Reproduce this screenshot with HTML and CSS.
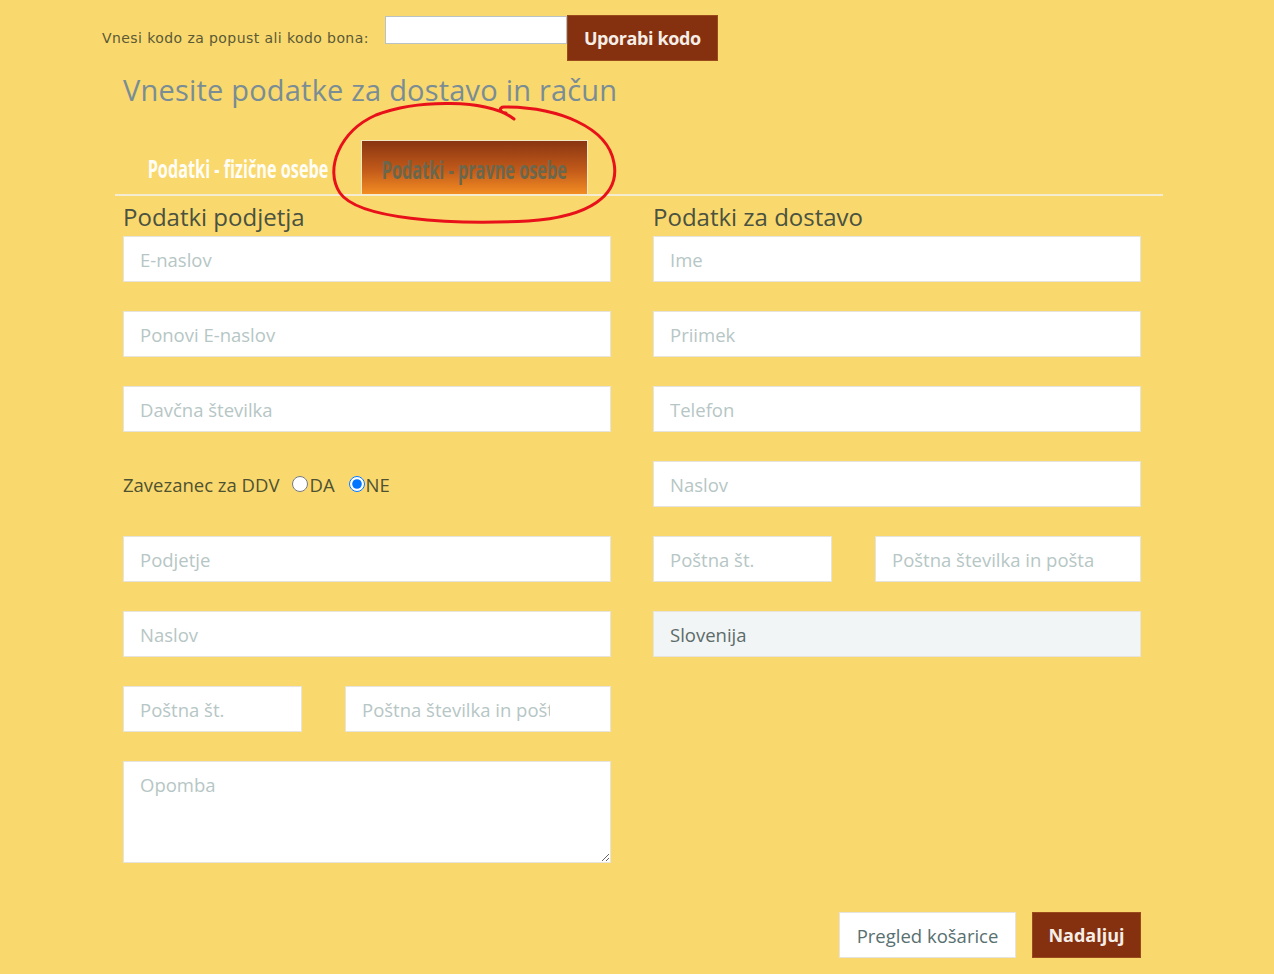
FILE: index.html
```html
<!DOCTYPE html>
<html lang="sl">
<head>
  <meta charset="UTF-8">
  <title>Podatki za dostavo</title>
  <link rel="stylesheet" href="styles.css">
</head>
<body>
  <div class="page">
    <div class="coupon">
      <label for="kupon">Vnesi kodo za popust ali kodo bona:</label>
      <input type="text" id="kupon" class="coupon-input">
      <button class="btn-brown btn-coupon">Uporabi kodo</button>
    </div>

    <h1 class="title">Vnesite podatke za dostavo in račun</h1>

    <div class="tabs">
      <div class="tab"><span>Podatki - fizične osebe</span></div>
      <div class="tab active"><span>Podatki - pravne osebe</span></div>
    </div>

    <div class="columns">
      <div class="col">
        <h2>Podatki podjetja</h2>
        <input class="field" type="text" placeholder="E-naslov">
        <input class="field" type="text" placeholder="Ponovi E-naslov">
        <input class="field" type="text" placeholder="Davčna številka">
        <div class="radio-row">
          <span>Zavezanec za DDV</span>
          <label class="opt"><input type="radio" name="ddv">DA</label>
          <label class="opt"><input type="radio" name="ddv" checked>NE</label>
        </div>
        <input class="field" type="text" placeholder="Podjetje">
        <input class="field" type="text" placeholder="Naslov">
        <div class="post-row">
          <input class="field post-num" type="text" placeholder="Poštna št.">
          <input class="field post-name short" type="text" placeholder="Poštna številka in pošta">
        </div>
        <textarea class="field note" placeholder="Opomba"></textarea>
      </div>

      <div class="col">
        <h2>Podatki za dostavo</h2>
        <input class="field" type="text" placeholder="Ime">
        <input class="field" type="text" placeholder="Priimek">
        <input class="field" type="text" placeholder="Telefon">
        <input class="field" type="text" placeholder="Naslov">
        <div class="post-row">
          <input class="field post-num" type="text" placeholder="Poštna št.">
          <input class="field post-name" type="text" placeholder="Poštna številka in pošta">
        </div>
        <input class="field readonly" type="text" value="Slovenija" readonly>
      </div>
    </div>

    <div class="actions">
      <button class="btn-white">Pregled košarice</button>
      <button class="btn-brown btn-next">Nadaljuj</button>
    </div>

    <!-- red marker drawn on the screenshot -->
    <svg class="marker" width="300" height="135" viewBox="0 0 300 135">
      <path d="M186 24 C160 4 90 4 48 20 C12 36 -4 74 12 98 C30 124 120 130 200 126 C262 122 292 100 286 68 C280 32 230 12 176 12 C170 12 172 18 178 18"
            fill="none" stroke="#e8111a" stroke-width="3" stroke-linecap="round"/>
    </svg>
  </div>
</body>
</html>
```

FILE: styles.css
```css
body {
  margin: 0;
  background-color: #f9d86e;
  font-family: "Open Sans", Arial, sans-serif;
  color: #4e5335;
}

.page {
  position: relative;
  width: 1062px;
  padding: 15px 0 16px 102px;
}

.coupon {
  display: flex;
  align-items: flex-start;
}

.coupon label {
  font-family: "DejaVu Sans", sans-serif;
  font-size: 14px;
  letter-spacing: 0.42px;
  color: #5b5a35;
  margin-top: 15px;
}

.coupon-input {
  width: 182px;
  height: 28px;
  margin: 1px 0 0 16px;
  box-sizing: border-box;
  border: 1px solid #b9c2c6;
  background: #fff;
}

.btn-brown {
  background: #85300f;
  color: #f6eee6;
  border: 1px solid #9b4a1c;
  font-family: "Open Sans", sans-serif;
  font-weight: bold;
  cursor: pointer;
}

.btn-coupon {
  width: 151px;
  height: 46px;
  font-size: 18px;
  letter-spacing: -0.4px;
}

.title {
  margin: 9px 0 0 21px;
  font-size: 29px;
  font-weight: normal;
  color: #7a8d95;
  letter-spacing: 0.2px;
}

.tabs {
  display: flex;
  align-items: flex-end;
  margin: 31px 0 0 13px;
  width: 1048px;
  border-bottom: 2px solid #f4edd2;
}

.tab {
  width: 246px;
  height: 54px;
  display: flex;
  align-items: center;
  justify-content: center;
  font-weight: bold;
  font-size: 25px;
  color: #fffdf5;
  white-space: nowrap;
}

.tab span {
  display: inline-block;
  transform: scaleX(0.65);
  margin-top: 2px;
}

.tab.active {
  width: 227px;
  box-sizing: border-box;
  border: 1px solid #f3e9c6;
  border-bottom: none;
  background: linear-gradient(#8a3612, #c25a1a 55%, #f28c22);
  color: #6a674d;
}

.columns {
  display: flex;
  gap: 42px;
  margin-left: 21px;
}

.col {
  width: 488px;
  display: flex;
  flex-direction: column;
}

.col h2 {
  margin: 6px 0 4px;
  font-size: 24px;
  font-weight: normal;
  color: #4a5240;
  line-height: 30px;
}

.field {
  height: 46px;
  box-sizing: border-box;
  border: 1px solid #e6e4dc;
  background: #fff;
  padding: 0 16px;
  margin-bottom: 29px;
  font-family: "Open Sans", sans-serif;
  font-size: 18.5px;
  color: #627070;
}

.field::placeholder {
  color: #b6c6c5;
}

.readonly {
  background: #f1f5f6;
  color: #5d6b69;
}

.radio-row {
  height: 46px;
  margin-bottom: 29px;
  display: flex;
  align-items: center;
  font-size: 18.5px;
  color: #4f5231;
}

.radio-row span {
  margin-right: 13px;
}

.opt {
  display: flex;
  align-items: center;
  margin-right: 14px;
}

.opt input {
  width: 16px;
  height: 16px;
  margin: 0 1px 0 0;
}

.post-row {
  display: flex;
  justify-content: space-between;
}

.post-num {
  width: 179px;
}

.post-name {
  width: 266px;
}

.post-name.short {
  padding-right: 60px;
}

.note {
  height: 102px;
  padding-top: 10px;
  resize: vertical;
}

.actions {
  display: flex;
  justify-content: flex-end;
  gap: 16px;
  margin: 20px 0 0 0;
  width: 1039px;
}

.btn-white {
  width: 177px;
  height: 46px;
  background: #fff;
  border: 1px solid #e6e4dc;
  color: #587070;
  font-family: "Open Sans", sans-serif;
  font-size: 18.5px;
  cursor: pointer;
}

.btn-next {
  width: 109px;
  height: 46px;
  font-size: 18px;
}

.marker {
  position: absolute;
  left: 328px;
  top: 95px;
}
```
